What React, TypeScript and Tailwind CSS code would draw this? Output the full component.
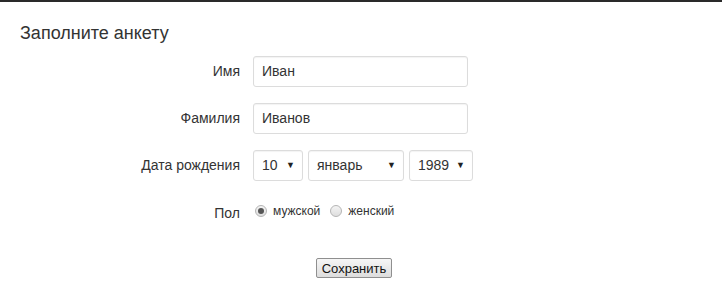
import React from "react";

function SelectBox({ value, width }: { value: string; width: string }) {
  return (
    <div
      className={`flex h-[31px] items-center justify-between rounded-[3px] border border-[#dcdcdc] bg-white pl-[8px] pr-[7px] shadow-[inset_0_1px_1px_rgba(0,0,0,0.05)] ${width}`}
    >
      <span className="text-[14px] text-[#333]">{value}</span>
      <span className="text-[9px] leading-none text-[#222]">▼</span>
    </div>
  );
}

function Radio({ checked, label }: { checked: boolean; label: string }) {
  return (
    <div className="flex items-center gap-[6px]">
      <span className="flex h-[12px] w-[12px] items-center justify-center rounded-full border border-[#b5b5b5] bg-gradient-to-b from-[#f4f4f4] to-[#dedede]">
        {checked && <span className="h-[6px] w-[6px] rounded-full bg-[#555]" />}
      </span>
      <span className="text-[12px] text-[#333]">{label}</span>
    </div>
  );
}

function Row({ label, children, labelClass = "" }: { label: string; children: React.ReactNode; labelClass?: string }) {
  return (
    <div className="flex items-center">
      <label className={`w-[240px] text-right text-[14px] text-[#333] ${labelClass}`}>{label}</label>
      <div className="ml-[13px] flex items-center">{children}</div>
    </div>
  );
}

function TextInput({ value }: { value: string }) {
  return (
    <div className="flex h-[31px] w-[215px] items-center rounded-[3px] border border-[#dcdcdc] bg-white px-[8px] text-[14px] text-[#333] shadow-[inset_0_1px_1px_rgba(0,0,0,0.05)]">
      {value}
    </div>
  );
}

export default function App() {
  return (
    <div
      className="h-[299px] w-[722px] border-t-2 border-[#2a2a2a] bg-white"
      style={{ fontFamily: '"Liberation Sans", Arial, sans-serif' }}
    >
      <div className="px-[20px] pt-[19px]">
        <h1 className="text-[18px] leading-[24px] text-[#333]">Заполните анкету</h1>
      </div>
      <div className="mt-[11px] flex flex-col">
        <Row label="Имя">
          <TextInput value="Иван" />
        </Row>
        <div className="mt-[16px]">
          <Row label="Фамилия">
            <TextInput value="Иванов" />
          </Row>
        </div>
        <div className="mt-[16px]">
          <Row label="Дата рождения">
            <div className="flex gap-[5px]">
              <SelectBox value="10" width="w-[50px]" />
              <SelectBox value="январь" width="w-[96px]" />
              <SelectBox value="1989" width="w-[64px]" />
            </div>
          </Row>
        </div>
        <div className="mt-[19px]">
          <Row label="Пол" labelClass="translate-y-[3px]">
            <div className="flex items-center gap-[10px] pl-[2px]">
              <Radio checked label="мужской" />
              <Radio checked={false} label="женский" />
            </div>
          </Row>
        </div>
        <div className="mt-[37px] flex justify-center pr-[14px]">
          <button className="h-[20px] w-[76px] rounded-[2px] border border-[#8f8f8f] bg-gradient-to-b from-[#f6f6f6] to-[#dddddd] text-[13px] leading-none text-[#111]">
            Сохранить
          </button>
        </div>
      </div>
    </div>
  );
}
